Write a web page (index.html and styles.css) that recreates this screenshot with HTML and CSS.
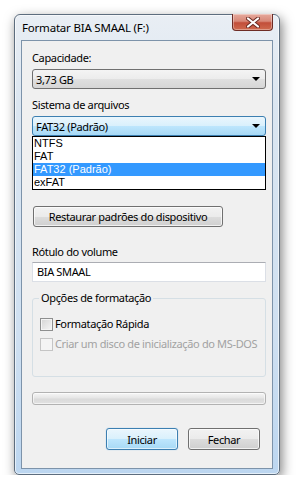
FILE: index.html
```html
<!DOCTYPE html>
<html lang="pt-BR">
<head>
    <meta charset="UTF-8">
    <title>Formatar BIA SMAAL (F:)</title>
    <link rel="stylesheet" href="styles.css">
</head>
<body>

    <div class="window">
        <!-- Title bar -->
        <div class="titlebar">
            <span class="title">Formatar BIA SMAAL (F:)</span>
            <button class="close-btn" aria-label="Fechar">
                <svg width="14" height="11" viewBox="0 0 14 11">
                    <path d="M2 1.5 L12 9.5 M12 1.5 L2 9.5" stroke="#6a2a22" stroke-width="4" stroke-linecap="round"/>
                    <path d="M2 1.5 L12 9.5 M12 1.5 L2 9.5" stroke="#fff" stroke-width="2.2" stroke-linecap="round"/>
                </svg>
            </button>
        </div>

        <!-- Dialog body -->
        <div class="client">
            <div class="field field-first">
                <label>Capacidade:</label>
                <div class="combo"><span>3,73 GB</span><span class="arrow"></span></div>
            </div>

            <div class="field field-drop">
                <label>Sistema de arquivos</label>
                <div class="combo combo-hot"><span>FAT32 (Padrão)</span><span class="arrow"></span></div>
                <ul class="dropdown">
                    <li>NTFS</li>
                    <li>FAT</li>
                    <li class="selected">FAT32 (Padrão)</li>
                    <li>exFAT</li>
                </ul>
            </div>

            <button class="btn btn-restore">Restaurar padrões do dispositivo</button>

            <div class="field field-label">
                <label>Rótulo do volume</label>
                <div class="textbox">BIA SMAAL</div>
            </div>

            <fieldset class="group">
                <legend>Opções de formatação</legend>
                <div class="check"><span class="box"></span>Formatação Rápida</div>
                <div class="check disabled"><span class="box"></span>Criar um disco de inicialização do MS-DOS</div>
            </fieldset>

            <div class="progress"></div>

            <div class="actions">
                <button class="btn btn-default">Iniciar</button>
                <button class="btn">Fechar</button>
            </div>
        </div>
    </div>

</body>
</html>
```

FILE: styles.css
```css
/* Global */
* {
    margin: 0;
    padding: 0;
    box-sizing: border-box;
}

body {
    background: #fff;
    font-family: "Noto Sans", "Open Sans", sans-serif;
    font-size: 11px;
    letter-spacing: -0.35px;
    color: #000;
}

/* Window frame */
.window {
    margin: 14px 0 0 14px;
    width: 266px;
    height: 461px;
    display: flex;
    flex-direction: column;
    padding: 0 6px 5px;
    border: 1px solid #5d6d7e;
    border-radius: 6px 6px 5px 5px;
    background: linear-gradient(to bottom, #e9eef4 0%, #dbe6f1 20%, #cfe0f1 70%, #bcd6f0 100%);
    box-shadow: 2px 4px 12px rgba(0, 0, 0, 0.5), inset 0 0 0 1px rgba(255, 255, 255, 0.6);
}

.titlebar {
    height: 25px;
    display: flex;
    justify-content: space-between;
    align-items: flex-start;
}

.title {
    padding-left: 1px;
    line-height: 25px;
    font-size: 11.5px;
    letter-spacing: -0.2px;
}

.close-btn {
    width: 41px;
    height: 17px;
    margin-top: -1px;
    display: flex;
    justify-content: center;
    align-items: center;
    border: 1px solid #6e2c25;
    border-top: none;
    border-radius: 0 0 4px 4px;
    background: linear-gradient(to bottom, #e6a99c 0%, #d88878 45%, #c24e3a 55%, #cf6a4e 100%);
    box-shadow: inset 0 0 0 1px rgba(255, 255, 255, 0.35);
}

/* Client area */
.client {
    flex: 1;
    display: flex;
    flex-direction: column;
    padding: 0 6px 0 10px;
    background: #f0f0f0;
    border: 1px solid #7d93aa;
}

.field-first {
    margin-top: 9px;
}

.field-drop {
    position: relative;
    margin-top: 8px;
}

.field-label {
    margin-top: 17px;
}

.field label {
    display: block;
    line-height: 16px;
    margin-bottom: 3px;
}

.field-label label {
    margin-bottom: 2px;
}

/* Combo boxes */
.combo {
    height: 20px;
    display: flex;
    justify-content: space-between;
    align-items: center;
    padding: 0 5px 0 3px;
    border: 1px solid #707070;
    border-radius: 3px;
    background: linear-gradient(to bottom, #f4f4f4 0%, #ececec 50%, #e0e0e0 50%, #d6d6d6 100%);
}

.combo-hot {
    border-color: #3c7fb1;
    background: linear-gradient(to bottom, #eaf6fd 0%, #d9f0fc 50%, #bee6fd 50%, #a7d9f5 100%);
}

.arrow {
    width: 0;
    height: 0;
    border-left: 4px solid transparent;
    border-right: 4px solid transparent;
    border-top: 4px solid #000;
}

/* Open dropdown list */
.dropdown {
    position: absolute;
    top: 100%;
    left: 0;
    right: 0;
    list-style: none;
    background: #fff;
    border: 1px solid #000;
    font-family: "Liberation Sans", Arial, sans-serif;
    font-size: 11px;
    letter-spacing: 0;
    z-index: 10;
}

.dropdown li {
    height: 13px;
    line-height: 13px;
    padding-left: 1px;
}

.dropdown li.selected {
    background: #3399ff;
    color: #fff;
}

/* Buttons */
.btn {
    font-family: inherit;
    font-size: 11px;
    letter-spacing: inherit;
    height: 22px;
    border: 1px solid #707070;
    border-radius: 3px;
    background: linear-gradient(to bottom, #f2f2f2 0%, #ebebeb 50%, #dddddd 50%, #cfcfcf 100%);
    box-shadow: inset 0 0 0 1px rgba(255, 255, 255, 0.7);
    color: #000;
}

.btn-restore {
    margin-top: 70px;
    margin-left: 1px;
    width: 190px;
    height: 21px;
    align-self: flex-start;
}

.btn-default {
    border-color: #3c7fb1;
    background: linear-gradient(to bottom, #eaf6fd 0%, #d9f0fc 50%, #bee6fd 50%, #a7d9f5 100%);
    box-shadow: inset 0 0 0 1px rgba(255, 255, 255, 0.6), 0 0 1px #6fb4e3;
}

/* Text box */
.textbox {
    height: 20px;
    line-height: 18px;
    padding-left: 4px;
    background: #fff;
    border: 1px solid #dbdfe6;
    border-top-color: #abadb3;
}

/* Group box */
.group {
    margin-top: 8px;
    padding: 0 7px 24px;
    border: 1px solid #d5dfe5;
    border-radius: 3px;
    min-width: 0;
}

.group legend {
    padding: 0 2px;
    line-height: 16px;
    margin-left: -1px;
}

.check {
    display: flex;
    align-items: center;
    line-height: 16px;
    margin-top: 4px;
    white-space: nowrap;
}

.check:first-of-type {
    margin-top: 10px;
}

.check .box {
    flex: none;
    width: 13px;
    height: 13px;
    margin-right: 2px;
    border: 1px solid #8e8f8f;
    background: linear-gradient(135deg, #d4d4d4 0%, #f6f6f6 100%);
    box-shadow: inset 0 0 0 1px #f4f4f4;
}

.check.disabled {
    color: #a2a2a2;
}

.check.disabled .box {
    border-color: #c5c5c5;
    background: #f4f4f4;
}

/* Progress bar */
.progress {
    margin-top: 15px;
    height: 13px;
    border: 1px solid #b2b2b2;
    border-radius: 3px;
    background: linear-gradient(to bottom, #f6f6f6 0%, #e6e6e6 45%, #dadada 55%, #e2e2e2 100%);
    box-shadow: inset 0 0 0 1px rgba(255, 255, 255, 0.6);
}

/* Bottom buttons */
.actions {
    margin-top: 23px;
    display: flex;
    justify-content: flex-end;
    gap: 10px;
    padding-right: 6px;
}

.actions .btn {
    width: 72px;
}
```
